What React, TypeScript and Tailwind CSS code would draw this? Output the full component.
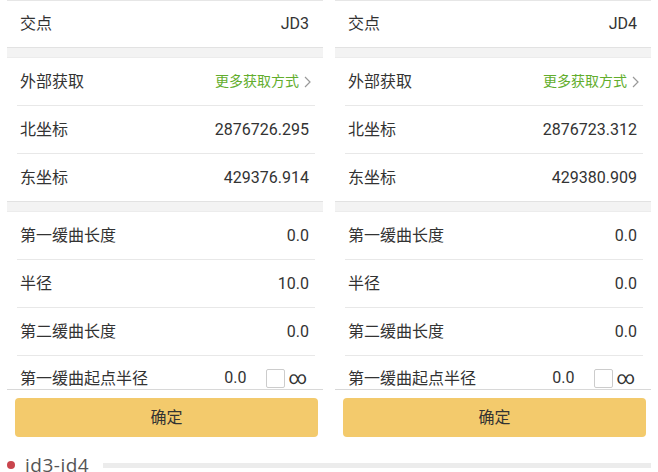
import React from "react";

const FONT = { fontFamily: 'Roboto, "Noto Sans CJK SC", sans-serif' };

function Row({ label, value, children }: { label: string; value?: string; children?: React.ReactNode }) {
  return (
    <div className="h-[47px] flex items-center justify-between pl-[13px] pr-[14px]">
      <span className="text-[16px] text-[#333]">{label}</span>
      {children ?? <span className="text-[16px] text-[#333]">{value}</span>}
    </div>
  );
}

function Divider() {
  return <div className="ml-[10px] mr-[8px] h-px bg-[#e8e8e8]" />;
}

function Band() {
  return <div className="h-[11px] bg-[#f3f3f3] border-t border-[#e2e2e2] border-b border-b-[#ececec]" />;
}

function Panel({ jd, north, east, radius }: { jd: string; north: string; east: string; radius: string }) {
  return (
    <div className="w-[316px] flex flex-col shrink-0">
      <div className="h-px bg-[#e6e6e6]" />
      <div className="h-[46px] flex items-center justify-between pl-[13px] pr-[14px]">
        <span className="text-[16px] text-[#333]">交点</span>
        <span className="text-[16px] text-[#333]">{jd}</span>
      </div>
      <Band />
      <Row label="外部获取">
        <span className="flex items-center text-[14px] text-[#62ad2c]">
          更多获取方式
          <svg width="10" height="14" viewBox="0 0 10 14" className="ml-[4px] -mr-[4px]">
            <path d="M2 2 L7 7 L2 12" stroke="#999" strokeWidth="1.2" fill="none" />
          </svg>
        </span>
      </Row>
      <Divider />
      <Row label="北坐标" value={north} />
      <Divider />
      <Row label="东坐标" value={east} />
      <Band />
      <Row label="第一缓曲长度" value="0.0" />
      <Divider />
      <Row label="半径" value={radius} />
      <Divider />
      <Row label="第二缓曲长度" value="0.0" />
      <Divider />
      <div className="h-[33px] flex items-end justify-between pl-[13px] pr-[16px] overflow-hidden">
        <span className="text-[16px] text-[#333] leading-[22px] mb-[-1px]">第一缓曲起点半径</span>
        <span className="flex items-center leading-[22px]">
          <span className="text-[16px] text-[#333] mr-[20px]">0.0</span>
          <span className="w-[19px] h-[19px] border border-[#ccc] bg-white rounded-[2px] mr-[3px]" />
          <span className="text-[18px] text-[#333]">∞</span>
        </span>
      </div>
      <div className="h-px bg-[#d8d8d8]" />
      <div className="pl-[8px] pr-[5px] pt-[8px]">
        <div className="h-[39px] rounded-[4px] bg-[#f3ca6c] flex items-center justify-center text-[16px] text-[#333]">确定</div>
      </div>
    </div>
  );
}

export default function App() {
  return (
    <div className="w-[658px] h-[472px] bg-white overflow-hidden relative" style={FONT}>
      <div className="flex pl-[7px] gap-[12px]">
        <Panel jd="JD3" north="2876726.295" east="429376.914" radius="10.0" />
        <Panel jd="JD4" north="2876723.312" east="429380.909" radius="0.0" />
      </div>
      <div className="flex items-center mt-[18px] h-[20px]">
        <span className="w-[8px] h-[8px] rounded-full bg-[#c9454d] ml-[7px]" />
        <span className="ml-[10px] text-[19px] text-[#555] tracking-[0.5px] leading-[20px]" style={{ fontFamily: '"Open Sans", "DejaVu Sans", sans-serif' }}>id3-id4</span>
        <span className="ml-[14px] h-[5px] w-[548px] bg-[#ececec]" />
      </div>
    </div>
  );
}
